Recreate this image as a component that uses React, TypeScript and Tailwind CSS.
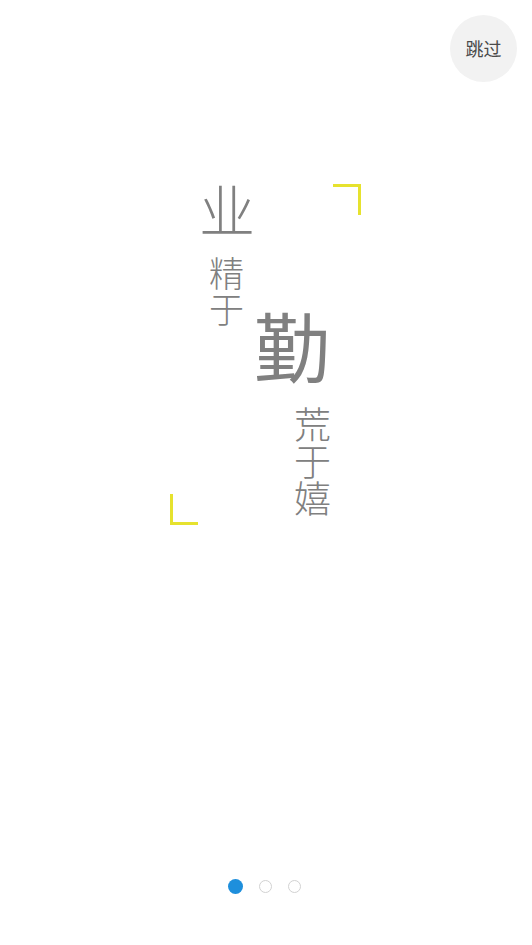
export default function App() {
  return (
    <div
      className="relative h-[945px] w-[532px] overflow-hidden bg-white"
      style={{ fontFamily: '"Noto Sans CJK SC", sans-serif' }}
    >
      {/* Skip button */}
      <div className="absolute right-[15px] top-[15px] flex h-[67px] w-[67px] items-center justify-center rounded-full bg-[#f2f2f2]">
        <span className="text-[18px] text-[#4a4a4a]">跳过</span>
      </div>

      {/* Poster composition */}
      <div className="absolute left-0 top-0 h-[600px] w-[532px] text-[#808080]">
        {/* top-right bracket */}
        <div className="absolute left-[333px] top-[184px] h-[31px] w-[28px] border-r-[3.5px] border-t-[3.5px] border-[#e6e22e]" />
        {/* bottom-left bracket */}
        <div className="absolute left-[170px] top-[494px] h-[31px] w-[28px] border-b-[3.5px] border-l-[3.5px] border-[#e6e22e]" />

        <div className="absolute left-[199px] top-[178px] text-[56px] font-light leading-[60px]">业</div>

        <div className="absolute left-[209px] top-[254px] flex w-[36px] flex-col text-[35px] font-light leading-[36px]">
          <span>精</span>
          <span>于</span>
        </div>

        <div className="absolute left-[254px] top-[302px] text-[76px] leading-[84px]">勤</div>

        <div className="absolute left-[294px] top-[405px] flex w-[38px] flex-col text-[37px] font-light leading-[37px]">
          <span>荒</span>
          <span>于</span>
          <span>嬉</span>
        </div>
      </div>

      {/* Pager dots */}
      <div className="absolute bottom-[51px] left-0 flex w-[532px] items-center justify-center gap-[16px] pr-[4px]">
        <span className="h-[15px] w-[15px] rounded-full bg-[#1e8fdc]" />
        <span className="h-[13px] w-[13px] rounded-full border border-[#d2d2d2] bg-white" />
        <span className="h-[13px] w-[13px] rounded-full border border-[#d2d2d2] bg-white" />
      </div>
    </div>
  );
}
